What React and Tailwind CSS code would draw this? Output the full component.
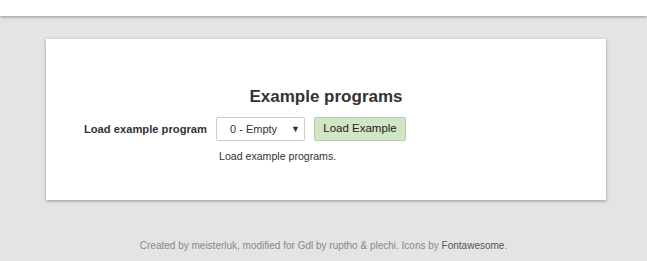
export default function App() {
	return (
		<div className="min-h-[261px] bg-[#e4e4e4] font-['Liberation_Sans',Arial,sans-serif] text-[#333]">
			<div className="h-4 bg-white shadow-[0_1px_3px_rgba(0,0,0,0.35)]" />
			<div className="px-[46px] pt-[23px]">
				<div className="w-[560px] h-[161px] bg-white shadow-[0_1px_3px_rgba(0,0,0,0.35)] pt-[48px]">
					<h2 className="text-center text-[17px] font-bold leading-5 text-[#333]">Example programs</h2>
					<div className="mt-[10px] flex items-center">
						<label className="w-[161px] text-right text-[11.2px] font-bold leading-4">Load example program</label>
						<div className="ml-[9px] flex gap-[9px]">
							<div className="relative w-[89px] h-6 border border-[#ccc] rounded-[2px] bg-white flex items-center">
								<span className="pl-[13px] text-[11px] text-[#333]">0 - Empty</span>
								<span className="absolute right-[4px] top-[5px] text-[9px] text-[#333]">▼</span>
							</div>
							<button className="w-[92px] h-6 border border-[#b5c9ab] rounded-[2px] bg-[#d0e6c4] text-[11.5px] text-[#222]">Load Example</button>
						</div>
					</div>
					<p className="mt-[7px] ml-[173px] text-[10.6px] leading-4 text-[#333]">Load example programs.</p>
				</div>
			</div>
			<p className="mt-[38px] text-center text-[10px] text-[#888]">
				Created by meisterluk, modified for Gdl by ruptho &amp; plechi. Icons by <span className="text-[#555]">Fontawesome</span>.
			</p>
		</div>
	);
}
